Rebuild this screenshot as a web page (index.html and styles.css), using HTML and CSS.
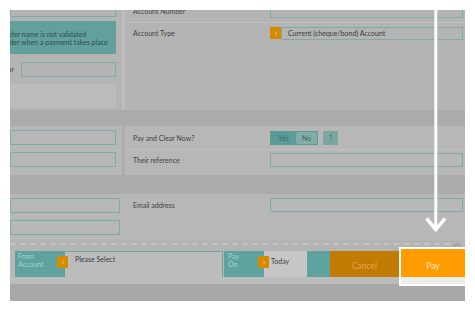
FILE: index.html
```html
<!DOCTYPE html>
<html lang="en">
<head>
    <meta charset="UTF-8">
    <meta name="viewport" content="width=device-width, initial-scale=1.0">
    <title>Make a Payment</title>
    <link rel="stylesheet" href="styles.css">
</head>
<body>
    <div class="screen">
        <section class="section top">
            <div class="col-left">
                <span class="input cut-input"></span>
                <div class="note">
                    <p>Account holder name is not validated</p>
                    <p>by the provider when a payment takes place</p>
                </div>
                <div class="or-row">
                    <span class="or-label">Creditor</span>
                    <span class="input"></span>
                </div>
                <div class="grey-box"></div>
            </div>
            <div class="sep"></div>
            <div class="col-right">
                <div class="frow cut-row">
                    <span class="label">Account Number</span>
                    <span class="input"></span>
                </div>
                <div class="frow type-row">
                    <span class="label">Account Type</span>
                    <span class="chev"><svg width="4" height="5" viewBox="0 0 4 5"><path d="M1 .5L3 2.5L1 4.5" fill="none" stroke="#f4c27a" stroke-width="1"/></svg></span>
                    <span class="select-box">Current (cheque/bond) Account</span>
                </div>
            </div>
        </section>

        <div class="band"></div>

        <section class="section mid">
            <div class="col-left stack">
                <span class="input"></span>
                <span class="input"></span>
            </div>
            <div class="sep"></div>
            <div class="col-right">
                <div class="frow pay-row">
                    <span class="label">Pay and Clear Now?</span>
                    <span class="toggle"><span class="yes">Yes</span><span class="no">No</span></span>
                    <span class="help">?</span>
                </div>
                <div class="frow ref-row">
                    <span class="label">Their reference</span>
                    <span class="input"></span>
                </div>
            </div>
        </section>

        <div class="band band-low"></div>

        <section class="section low">
            <div class="col-left stack">
                <span class="input"></span>
                <span class="input"></span>
            </div>
            <div class="sep"></div>
            <div class="col-right">
                <div class="frow email-row">
                    <span class="label">Email address</span>
                    <span class="input"></span>
                </div>
            </div>
        </section>

        <div class="dash-row">
            <span class="dash"></span>
            <span class="help-dot"></span>
        </div>

        <footer class="actions">
            <div class="tag from">From<br>Account</div>
            <div class="pick wide">
                <span class="chev"><svg width="4" height="5" viewBox="0 0 4 5"><path d="M1 .5L3 2.5L1 4.5" fill="none" stroke="#f4c27a" stroke-width="1"/></svg></span>
                <span class="pick-text">Please Select</span>
            </div>
            <div class="tag pay-on">Pay<br>On</div>
            <div class="pick today">
                <span class="chev"><svg width="4" height="5" viewBox="0 0 4 5"><path d="M1 .5L3 2.5L1 4.5" fill="none" stroke="#f4c27a" stroke-width="1"/></svg></span>
                <span class="pick-text">Today</span>
            </div>
            <div class="tag blank"></div>
            <div class="btn cancel">Cancel</div>
            <div class="pay-spot">
                <div class="btn pay">Pay</div>
                <div class="pay-strip"></div>
            </div>
        </footer>
        <div class="under-strip"></div>
        <div class="under"></div>
    </div>

    <svg class="arrow" width="475" height="310" viewBox="0 0 475 310">
        <path d="M435.8 0V229" stroke="#fff" stroke-width="3" fill="none"/>
        <path d="M426.5 218.5L435.8 229.5L445 218.5" stroke="#fff" stroke-width="3.5" fill="none"/>
    </svg>
</body>
</html>
```

FILE: styles.css
```css
body {
    margin: 0;
    background: #fff;
    font-family: Lato, "Open Sans", sans-serif;
    font-size: 7px;
    color: #444;
}
.screen {
    width: 455px;
    height: 291px;
    margin: 10px 0 0 10px;
    background: #b4b4b4;
    overflow: hidden;
    display: flex;
    flex-direction: column;
}
.section {
    display: grid;
    grid-template-columns: 112px 3px 1fr;
    flex: none;
}
.input {
    display: block;
    height: 15px;
    box-sizing: border-box;
    border: 1px solid #7eaaa8;
}
.col-left {
    display: flex;
    flex-direction: column;
    padding-right: 6px;
}
.col-right {
    display: flex;
    flex-direction: column;
}
.frow {
    display: flex;
    align-items: center;
    padding: 0 2px 0 8px;
}
.frow .label {
    width: 137px;
    flex: none;
    color: #444;
}
.frow .input {
    flex: 1;
    height: 14px;
}

/* top part */
.top { height: 100px; }
.top .sep { background: #bdbdbd; }
.cut-input { margin-top: -8px; }
.note {
    margin-top: 4px;
    height: 33px;
    background: #61a09d;
    display: flex;
    flex-direction: column;
    justify-content: center;
    line-height: 8px;
    white-space: nowrap;
    color: #324e4d;
}
.note p { margin: 0 0 0 -37px; }
.or-row {
    display: flex;
    margin-top: 8px;
}
.or-label {
    width: 40px;
    margin-left: -36px;
    text-align: right;
    line-height: 15px;
    flex: none;
}
.or-row .input {
    flex: 1;
    margin-left: 7px;
}
.grey-box {
    margin-top: 7px;
    height: 24px;
    background: #bbbbbb;
}
.cut-row {
    margin-top: -10px;
    height: 22px;
    border-bottom: 1px solid #c1c1c1;
}
.type-row {
    padding-top: 4px;
    align-items: flex-start;
}
.type-row .label { line-height: 13px; }
.chev {
    width: 11px;
    height: 12px;
    flex: none;
    background: #d68a00;
    display: flex;
    align-items: center;
    justify-content: center;
}
.select-box {
    flex: 1;
    height: 13px;
    box-sizing: border-box;
    border: 1px solid #7eaaa8;
    padding-left: 6px;
    line-height: 11px;
    color: #3c3c3c;
}

.band {
    height: 16px;
    background: #ababab;
    flex: none;
}
.band-low { height: 19px; }

/* middle part */
.mid {
    height: 49px;
    background: #b7b7b7;
}
.mid .sep { background: #adadad; }
.stack {
    padding-top: 4px;
    gap: 7px;
}
.pay-row {
    height: 23px;
    border-bottom: 1px solid #c1c1c1;
}
.toggle {
    display: flex;
    height: 14px;
    width: 48px;
    box-sizing: border-box;
    border: 1px solid #5b9c98;
    background: #5b9c98;
    color: #3e6967;
    line-height: 12px;
    text-align: center;
}
.toggle .yes { width: 25px; }
.toggle .no {
    flex: 1;
    background: #80aeab;
    border-radius: 2px;
}
.help {
    width: 15px;
    height: 14px;
    margin-left: 5px;
    background: #7aa6a4;
    color: #456f6d;
    line-height: 14px;
    text-align: center;
}
.ref-row {
    padding-top: 3px;
    align-items: flex-start;
}
.ref-row .label { line-height: 14px; }

/* lower part */
.low {
    height: 44px;
    background: #b7b7b7;
}
.low .col-left { padding-right: 2px; }
.email-row {
    padding-top: 4px;
    align-items: flex-start;
}
.email-row .label { line-height: 14px; }

.dash-row {
    display: flex;
    height: 13px;
    padding-top: 3px;
    box-sizing: border-box;
    border-top: 1px solid #bdbdbd;
    flex: none;
}
.dash {
    flex: 1;
    height: 0;
    margin-top: 1px;
    border-top: 2px dashed #c3c3c3;
}
.help-dot {
    width: 6px;
    height: 6px;
    margin: 2px 4px 0 3px;
    border: 1px solid #8e8e8e;
    border-radius: 50%;
}

/* action bar */
.actions {
    display: flex;
    height: 26px;
    padding-left: 5px;
    background: #b8b8b8;
    flex: none;
}
.tag {
    background: #5fa39f;
    color: #a6d0cc;
    line-height: 8px;
    padding: 1px 3px;
    box-sizing: border-box;
}
.from { width: 50px; }
.pay-on { width: 40px; margin-left: 1px; padding-left: 4px; }
.blank { width: 23px; }
.pick {
    display: flex;
    align-items: flex-start;
    box-sizing: border-box;
}
.pick .chev { margin-top: 4px; }
.wide {
    width: 158px;
    background: #bcbcbc;
    border-top: 1px solid #6fa6a2;
    border-right: 1px solid #6fa6a2;
}
.wide .chev { margin-left: -8px; }
.wide .pick-text {
    padding: 3px 0 0 7px;
    line-height: 8px;
    color: #3c3c3c;
}
.today {
    width: 43px;
    background: #c6c6c6;
    border-top: 1px solid #c6c6c6;
}
.today .chev { margin-left: -6px; }
.today .pick-text {
    padding: 5px 0 0 2px;
    line-height: 8px;
    color: #444;
}
.btn {
    display: flex;
    align-items: center;
    justify-content: center;
    box-sizing: border-box;
    font-size: 8.5px;
}
.cancel {
    width: 69px;
    padding-top: 3px;
    background: #c27b02;
    color: #e7a34c;
}
.pay-spot {
    flex: 1;
    margin-top: -4px;
    padding: 2px 0 2px 2px;
    background: #fff;
    align-self: flex-start;
    position: relative;
    z-index: 1;
}
.pay {
    height: 28px;
    padding-top: 6px;
    background: #ff9c00;
    color: #ffe8c4;
}
.pay-strip {
    height: 7px;
    background: #eeeeee;
}
.under-strip {
    height: 7px;
    background: #bcbcbc;
    flex: none;
}
.under {
    flex: 1;
    background: #a8a8a8;
}

.arrow {
    position: absolute;
    left: 0;
    top: 0;
    pointer-events: none;
}
```
